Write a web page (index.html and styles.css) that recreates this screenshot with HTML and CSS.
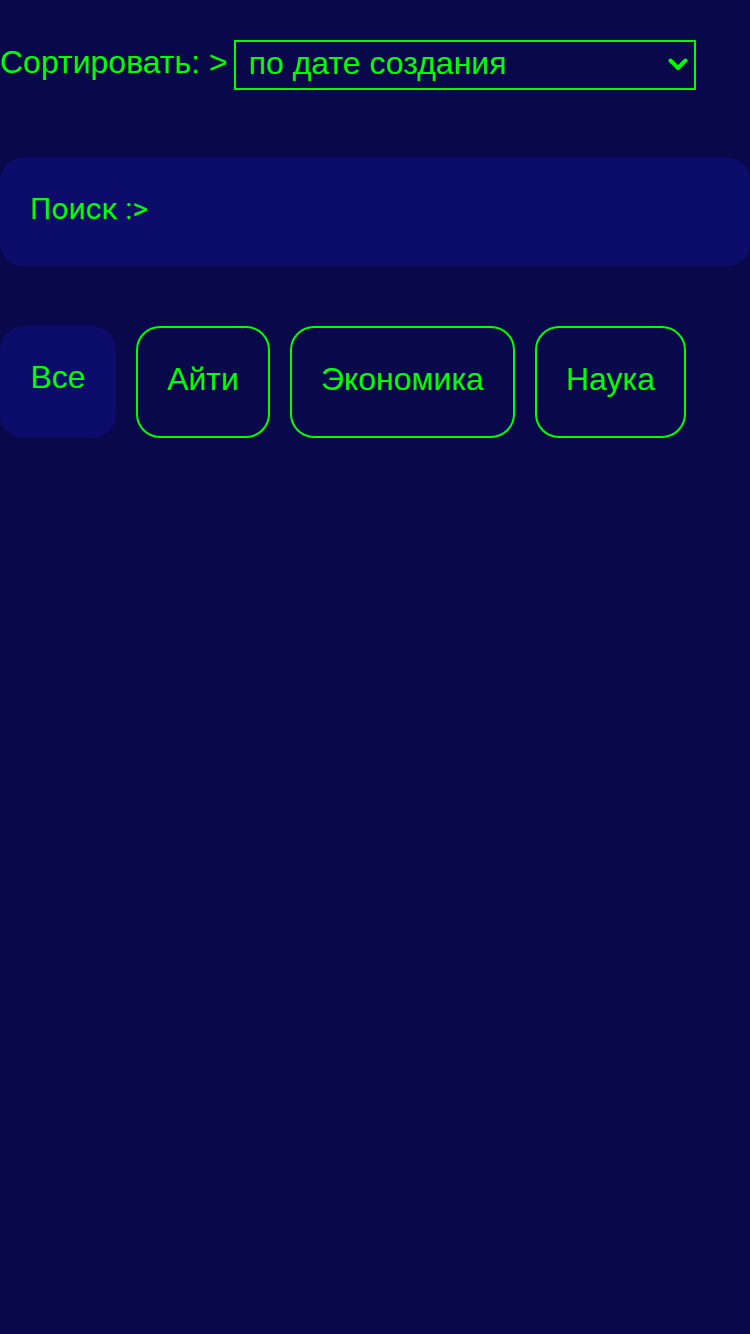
FILE: index.html
```html
<!DOCTYPE html>
<html lang="ru">
<head>
<meta charset="utf-8">
<title>Фильтр</title>
<link rel="stylesheet" href="styles.css">
</head>
<body>
<div class="page">
  <div class="sort-row">
    <label class="sort-label" for="sort">Сортировать: &gt;</label>
    <div class="select-wrap">
      <select id="sort" class="sort-select">
        <option>по дате создания</option>
        <option>по названию</option>
      </select>
      <svg class="chevron" width="20" height="13" viewBox="0 0 20 13" aria-hidden="true">
        <path d="M2.5 2.5 L10 10 L17.5 2.5" fill="none" stroke="#00ff00" stroke-width="4" stroke-linecap="round" stroke-linejoin="round"/>
      </svg>
    </div>
  </div>

  <div class="search">
    <input class="search-input" type="text" placeholder="Поиск :>">
  </div>

  <div class="filters">
    <button class="chip chip-active">Все</button>
    <button class="chip">Айти</button>
    <button class="chip">Экономика</button>
    <button class="chip">Наука</button>
  </div>
</div>
</body>
</html>
```

FILE: styles.css
```css
html, body {
  margin: 0;
  padding: 0;
  background: #09084a;
  min-height: 100%;
}

body {
  font-family: "Liberation Sans", Arial, sans-serif;
  color: #00ff00;
  width: 750px;
  height: 1334px;
}

.page {
  padding-top: 40px;
}

.sort-row {
  display: flex;
  align-items: center;
  gap: 6px;
  height: 50px;
}

.sort-label {
  font-size: 32px;
  line-height: 1;
  margin-top: -6px;
}

.select-wrap {
  position: relative;
  width: 462px;
  height: 50px;
}

.sort-select {
  appearance: none;
  -webkit-appearance: none;
  width: 100%;
  height: 100%;
  box-sizing: border-box;
  border: 2px solid #00ff00;
  border-radius: 0;
  background: transparent;
  color: #00ff00;
  font-family: "Liberation Sans", Arial, sans-serif;
  font-size: 32px;
  padding: 0 40px 4px 13px;
  outline: none;
}

.sort-select option {
  background: #09084a;
}

.chevron {
  position: absolute;
  right: 8px;
  top: 18px;
  pointer-events: none;
}

.search {
  margin-top: 68px;
  height: 108px;
  background: #0c0d6b;
  border-radius: 22px;
  display: flex;
  align-items: center;
  padding: 0 30px 6px;
  box-sizing: border-box;
}

.search-input {
  flex: 1;
  border: none;
  background: transparent;
  outline: none;
  padding: 0;
  color: #00ff00;
  font-family: Roboto, "Liberation Sans", sans-serif;
  font-size: 30px;
  line-height: 40px;
  height: 40px;
}

.search-input::placeholder {
  color: #00ff00;
  opacity: 1;
}

.filters {
  margin-top: 60px;
  display: flex;
  gap: 20px;
}

.chip {
  height: 112px;
  box-sizing: border-box;
  padding: 0 29px 6px;
  border: 2px solid #00ff00;
  border-radius: 24px;
  background: transparent;
  color: #00ff00;
  font-family: "Liberation Sans", Arial, sans-serif;
  font-size: 32px;
  line-height: 1;
  display: flex;
  align-items: center;
}

.chip-active {
  background: #0c0d6b;
  border-color: transparent;
  padding: 0 28.5px 10px;
}
```
